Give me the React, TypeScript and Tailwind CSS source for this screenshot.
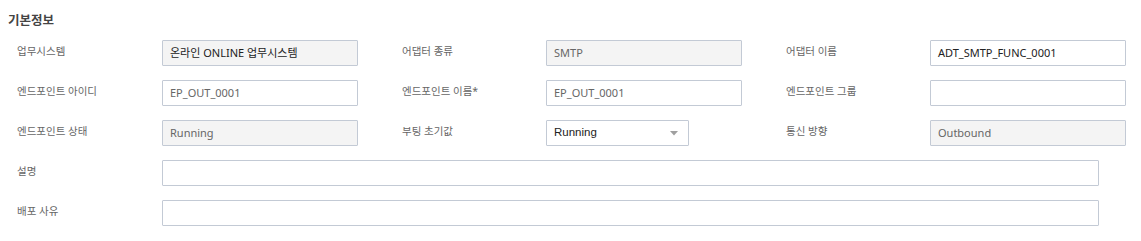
import React from "react";

const font = "font-['Noto_Sans','Noto_Sans_CJK_KR',sans-serif]";

function Label({ text, first }: { text: string; first?: boolean }) {
  return (
    <div
      className={`flex items-center h-[26px] pb-[3px] text-[10.5px] text-[#666] ${first ? "pl-[17px]" : "pl-[44px]"}`}
    >
      {text}
    </div>
  );
}

function Field({ value, disabled, dim }: { value?: string; disabled?: boolean; dim?: boolean }) {
  return (
    <div
      className={`flex items-center h-[26px] w-[196px] border border-[#c3cad5] rounded-[1px] pl-[7px] text-[11px] ${
        disabled ? "bg-[#f4f4f4]" : "bg-white"
      } ${dim ? "text-[#666]" : "text-[#222]"}`}
    >
      {value}
    </div>
  );
}

function SelectBox() {
  return (
    <div className="flex h-[26px] w-[143px] border border-[#c3cad5] rounded-[1px] bg-white pl-[7px] pr-[10px] items-start justify-between">
      <span className="font-['Liberation_Sans',Arial,sans-serif] text-[11.5px] text-[#222] leading-[14px] pt-[4px]">
        Running
      </span>
      <svg width="8" height="5" viewBox="0 0 8 5" className="mt-[10px]">
        <polygon points="0,0 8,0 4,4.5" fill="#a0a0a0" />
      </svg>
    </div>
  );
}

export default function App() {
  return (
    <div className={`w-[1141px] h-[241px] bg-white ${font}`}>
      <div className="pl-[8px] pt-[12px] h-[40px] text-[12.5px] font-bold text-[#444] leading-[18px]">기본정보</div>
      <div className="grid grid-cols-[162px_196px_188px_196px_188px_196px] gap-y-[14px]">
        <Label text="업무시스템" first />
        <Field value="온라인 ONLINE 업무시스템" disabled />
        <Label text="어댑터 종류" />
        <Field value="SMTP" disabled dim />
        <Label text="어댑터 이름" />
        <Field value="ADT_SMTP_FUNC_0001" />

        <Label text="엔드포인트 아이디" first />
        <Field value="EP_OUT_0001" dim />
        <Label text="엔드포인트 이름*" />
        <Field value="EP_OUT_0001" dim />
        <Label text="엔드포인트 그룹" />
        <Field />

        <Label text="엔드포인트 상태" first />
        <Field value="Running" disabled dim />
        <Label text="부팅 초기값" />
        <SelectBox />
        <Label text="통신 방향" />
        <Field value="Outbound" disabled dim />

        <Label text="설명" first />
        <div className="col-span-5">
          <div className="h-[26px] w-[937px] border border-[#c3cad5] rounded-[1px] bg-white" />
        </div>

        <Label text="배포 사유" first />
        <div className="col-span-5">
          <div className="h-[26px] w-[937px] border border-[#c3cad5] rounded-[1px] bg-white" />
        </div>
      </div>
    </div>
  );
}
